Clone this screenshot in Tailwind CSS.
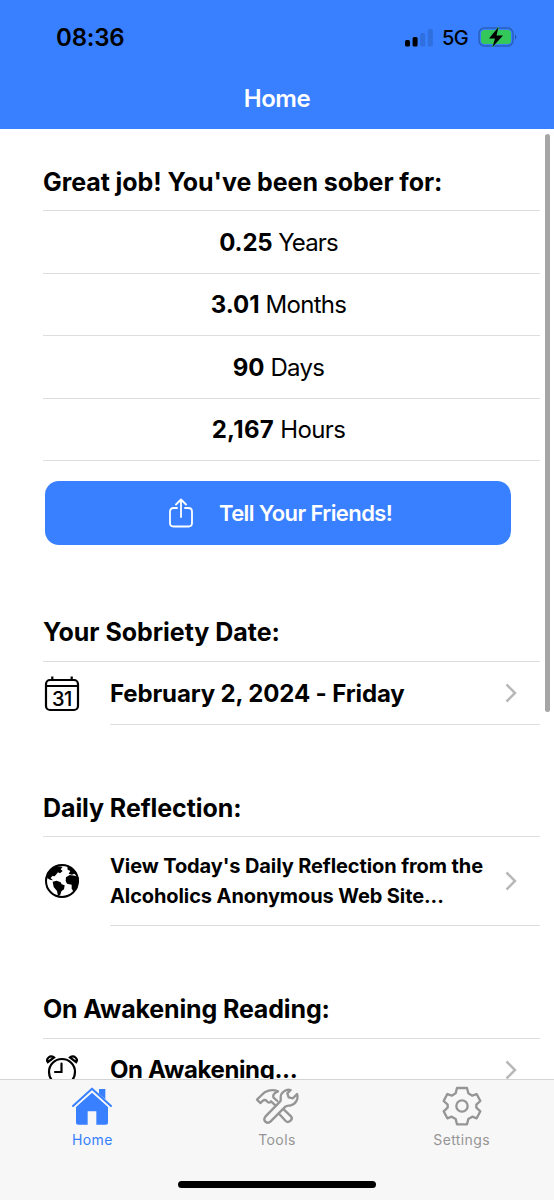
<!DOCTYPE html>
<html lang="en">
<head>
    <meta charset="UTF-8">
    <meta name="viewport" content="width=device-width, initial-scale=1.0">
    <title>Home</title>
    <script src="https://cdn.jsdelivr.net/npm/@tailwindcss/browser@4"></script>
</head>
<body class="bg-white">
    <div class="relative flex flex-col w-[554px] h-[1200px] overflow-hidden bg-white text-black font-['Inter','Liberation_Sans',sans-serif]">
        <!-- Header -->
        <header class="shrink-0 h-[129px] bg-[#3880ff]">
            <div class="flex justify-between items-center h-[75px] pl-[56px] pr-[37px]">
                <span class="text-[24px] font-semibold tracking-[-0.2px]">08:36</span>
                <div class="flex items-center">
                    <svg class="w-7 h-[18px]" viewBox="0 0 28 18">
                        <rect x="0" y="11" width="5" height="6.5" rx="1.5"/>
                        <rect x="7.6" y="8" width="5" height="9.5" rx="1.5"/>
                        <rect x="15.2" y="4" width="5" height="13.5" rx="1.5" fill="#2f6fde"/>
                        <rect x="22.8" y="0" width="5" height="17.5" rx="1.5" fill="#2f6fde"/>
                    </svg>
                    <span class="ml-[9px] text-[20px] font-medium tracking-[-0.6px]">5G</span>
                    <svg class="ml-2.5 w-[39px] h-[22px]" viewBox="0 0 39 22">
                        <rect x="1" y="1" width="34" height="18" rx="5.5" fill="none" stroke="#2a5fba" stroke-width="1.5"/>
                        <rect x="3" y="3" width="30" height="14" rx="3.5" fill="#34c759"/>
                        <path d="M37 7.5c1.7.8 1.7 4.2 0 5z" fill="#2455a8"/>
                        <path d="M20.500 0L11 11.500h6L14.500 20 25 8.500h-6.500z" stroke="#34c759" stroke-width="1" paint-order="stroke"/>
                    </svg>
                </div>
            </div>
            <h1 class="h-[48px] leading-[47px] text-center text-[24px] font-semibold tracking-[-0.4px] text-white">Home</h1>
        </header>

        <!-- Content -->
        <main class="flex-1 min-h-0 overflow-hidden pl-[43px] pr-[14px]">
            <h2 class="h-[82px] pt-[38px] leading-[30px] border-b border-[#dedede] text-[25px] font-bold tracking-[-0.08px]">Great job! You've been sober for:</h2>
            <div class="h-[62.5px] pt-0.5 pr-[26px] flex items-center justify-center border-b border-[#dedede] text-[24px] tracking-[-0.9px]"><p><b class="font-bold tracking-[-0.2px]">0.25</b> Years</p></div>
            <div class="h-[62.5px] pt-px pr-[26px] flex items-center justify-center border-b border-[#dedede] text-[24px] tracking-[-0.7px]"><p><b class="font-bold tracking-normal">3.01</b> Months</p></div>
            <div class="h-[62.5px] pt-0.5 pr-[26px] flex items-center justify-center border-b border-[#dedede] text-[24px] tracking-[-0.7px]"><p><b class="font-bold tracking-normal">90</b> Days</p></div>
            <div class="h-[62.5px] pt-px pr-[26px] flex items-center justify-center border-b border-[#dedede] text-[24px] tracking-[-0.6px]"><p><b class="font-bold tracking-[0.3px]">2,167</b> Hours</p></div>

            <button class="flex items-center mt-5 ml-[2px] w-[466px] h-[64px] pl-[124px] rounded-[14px] bg-[#3880ff] text-white text-[22px] font-semibold tracking-[-0.6px]">
                <svg class="w-6 h-[30px] mr-[26px]" viewBox="0 0 24 30" fill="none" stroke="#fff" stroke-width="1.8" stroke-linecap="round" stroke-linejoin="round">
                    <path d="M8 10H4.500C2.500 10 1 11.500 1 13.500V25c0 2 1.500 3.500 3.500 3.500h15c2 0 3.500-1.500 3.500-3.500V13.500c0-2-1.500-3.500-3.500-3.500H16M12 19V2M7 6.500l5-5 5 5"/>
                </svg>
                Tell Your Friends!
            </button>

            <h2 class="h-[117px] pt-[72px] leading-[30px] border-b border-[#dedede] text-[25px] font-bold tracking-[-0.03px]">Your Sobriety Date:</h2>
            <div class="flex items-center h-[63px]">
                <svg class="w-[38px] h-[38px] mr-[29px]" viewBox="0 1 38 38" fill="none" stroke="#000" stroke-width="2.2">
                    <rect x="3" y="6" width="32" height="30" rx="4"/>
                    <path d="M3 12h32M9.300 2.500V6M28.700 2.500V6"/>
                    <text x="19" y="31.500" text-anchor="middle" fill="#000" stroke="none" class="text-[20px] font-medium tracking-[-0.3px]">31</text>
                </svg>
                <div class="flex flex-1 items-center justify-between h-full pr-[23px] border-b border-[#dedede]">
                    <span class="pt-px text-[24px] font-bold tracking-[-0.13px]">February 2, 2024 - Friday</span>
                    <svg class="w-3 h-5" viewBox="0 0 12 20" fill="none" stroke="#b8b8b8" stroke-width="2.500"><path d="M1.500 1.500l8.500 8.500-8.500 8.500"/></svg>
                </div>
            </div>

            <h2 class="h-[112px] pt-[68px] leading-[30px] border-b border-[#dedede] text-[25px] font-bold tracking-[-0.08px]">Daily Reflection:</h2>
            <div class="flex items-center h-[89px]">
                <svg class="w-[38px] h-[38px] mr-[29px]" viewBox="39 248 114 114">
                    <circle cx="96" cy="302" r="48" fill="none" stroke="#000" stroke-width="6"/>
                    <path d="M50 292l12-26 16-9 20 2-6 8 6 5-8 7-6-3-10 12-7-1-5 6 7 7-9-2z"/>
                    <path d="M68 304l12-3 12 5 3 6 9 3-2 12-8 6-3 10-7 5-3-16-10-12z"/>
                    <path d="M108 291l11-7 16 2 11 5v14l-9 22-7 6-5-8v-12l-14-3-4-8z"/>
                    <path d="M112 257l15 5 11 14 2 9-8-5-6 3-10-3 5-8-8-4z"/>
                </svg>
                <div class="flex flex-1 items-center justify-between h-full pr-[23px] border-b border-[#dedede]">
                    <p class="whitespace-nowrap pb-px text-[20px] leading-[30px] font-bold tracking-[-0.1px]">View Today's Daily Reflection from the<br>Alcoholics Anonymous Web Site...</p>
                    <svg class="w-3 h-5 shrink-0" viewBox="0 0 12 20" fill="none" stroke="#b8b8b8" stroke-width="2.500"><path d="M1.500 1.500l8.500 8.500-8.500 8.500"/></svg>
                </div>
            </div>

            <h2 class="h-[113px] pt-[68px] leading-[30px] border-b border-[#dedede] text-[25px] font-bold tracking-[-0.15px]">On Awakening Reading:</h2>
            <div class="flex items-center h-[63px]">
                <svg class="w-[38px] h-[38px] mr-[29px]" viewBox="0 0 38 38" fill="none" stroke="#000" stroke-width="2.200" stroke-linecap="round">
                    <circle cx="19" cy="20" r="13"/>
                    <path d="M18.500 11.500V20H12"/>
                    <path d="M4.800 10.200C2.500 7 7 2.500 11 5.500zM33.200 10.200C35.500 7 31 2.500 27 5.500z"/>
                </svg>
                <div class="flex flex-1 items-center justify-between h-full pr-[23px] border-b border-[#dedede]">
                    <span class="text-[24px] font-bold tracking-[-0.37px]">On Awakening...</span>
                    <svg class="w-3 h-5" viewBox="0 0 12 20" fill="none" stroke="#b8b8b8" stroke-width="2.500"><path d="M1.500 1.500l8.500 8.500-8.500 8.500"/></svg>
                </div>
            </div>
        </main>

        <!-- Tab bar -->
        <nav class="shrink-0 h-[121px] border-t border-[#d4d4d4] bg-[#f7f7f7]">
            <div class="grid grid-cols-3 h-[71px] pt-[5px] text-[14px] leading-[20px] tracking-[0.4px] text-[#959595]">
                <a class="flex flex-col items-center text-[#3880ff]">
                    <svg class="w-[42px] h-[42px] mb-[3px]" viewBox="154 75 126 126" fill="#3880ff">
                        <path d="M217 98l48 43v47q0 6-6 6h-29v-40h-26v40h-29q-6 0-6-6v-47z"/>
                        <path d="M160 138l57-52 57 52" fill="none" stroke="#3880ff" stroke-width="6" stroke-linecap="round" stroke-linejoin="round"/>
                        <path d="M238 87h19v31l-19-17z"/>
                        <path d="M165 142l52-47 52 47" fill="none" stroke="#f7f7f7" stroke-width="3"/>
                    </svg>
                    Home
                </a>
                <a class="flex flex-col items-center">
                    <svg class="w-[44px] h-[42px] mb-[3px]" viewBox="705 75 132 126" fill="none" stroke="#959595" stroke-width="7" stroke-linejoin="round" stroke-linecap="round">
                        <path d="M812 90c-14-4-30 8-30 22 0 6 2 9-2 13l-44 45c-10 12 6 24 16 14l44-44c6-4 10-2 16-4 16-4 24-20 19-34l-12 13-13-3-4-12z"/>
                        <path d="M767 137l-14-13c-4 6-8 4-12 0-4-5-9-5-12-2l-8 7-10-10 14-14c10-13 30-19 49-11-10 4-16 10-14 18l12 11"/>
                        <path d="M777 161l20 22c8 8 24-4 16-14l-22-21"/>
                    </svg>
                    Tools
                </a>
                <a class="flex flex-col items-center">
                    <svg class="w-[42px] h-[42px] mb-[3px]" viewBox="62 30 126 126" fill="none" stroke="#959595" stroke-width="7" stroke-linejoin="round">
                        <path d="M110 39h30l4 16 12 7 13-5 11 21-12 11v9l12 11-11 21-13-5-12 7-4 16h-30l-4-16-12-7-13 5-11-21 12-11v-9l-12-11 11-21 13 5 12-7z"/>
                        <circle cx="125" cy="93" r="17"/>
                    </svg>
                    Settings
                </a>
            </div>
            <div class="mx-auto mt-[30px] w-[198px] h-[7px] rounded-full bg-black"></div>
        </nav>

        <!-- Scrollbar -->
        <div class="absolute right-[4px] top-[134px] w-[5px] h-[578px] rounded-full bg-[#a6a6a6]"></div>
    </div>
</body>
</html>
